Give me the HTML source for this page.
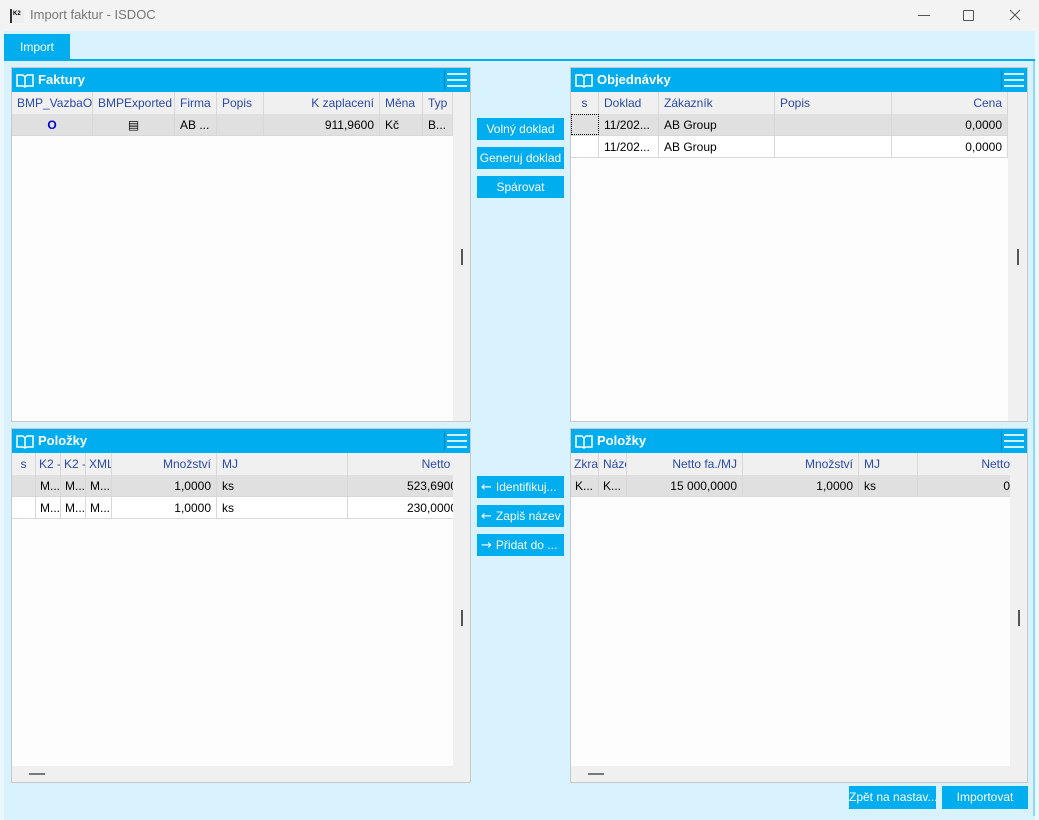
<!DOCTYPE html>
<html><head><meta charset="utf-8"><style>
*{box-sizing:border-box;margin:0;padding:0}
body{width:1039px;height:820px;position:relative;overflow:hidden;background:#f3f3f3;font-family:"Liberation Sans",sans-serif;font-size:12px;color:#000}
.a{position:absolute}
.title{left:0;top:0;width:1039px;height:31px;background:#f3f3f3}
.panel{background:#fdfdfd;border:1px solid #c8c8c8}
.ph{background:#00adef;color:#fff;font-weight:bold;font-size:13px;height:24px;line-height:24px}
.ch{background:#f0f0f0;color:#2a4aa8;height:22px;line-height:22px;white-space:nowrap;overflow:hidden}
.c{position:absolute;top:0;height:100%;border-right:1px solid #d8d8d8;padding:0 5px;overflow:hidden;white-space:nowrap}
.r{text-align:right}
.row{height:22px;line-height:22px;white-space:nowrap;overflow:hidden;border-bottom:1px solid #d8d8d8}
.sel{background:#e0e0e0}
.btn{background:#00adef;color:#fff;text-align:center;line-height:22px;height:22px;font-size:12px;white-space:nowrap;overflow:hidden}
.vs{background:#f0f0f0}
.menu{position:absolute;right:3px;top:5px;width:20px;height:14px;border-top:2px solid #cfeffd;border-bottom:2px solid #cfeffd}
.menu:after{content:"";position:absolute;left:0;right:0;top:4px;height:2px;background:#cfeffd}
.msep{position:absolute;right:25px;top:2px;width:1px;height:20px;background:#0080c0}
.ar{font-family:"DejaVu Sans",sans-serif;font-size:13px;margin-right:4px}
</style></head><body>
<div class="a title">
 <div class="a" style="left:10px;top:9px;width:14px;height:14px;border-left:2px solid #333;background:#eee;font-size:6px;font-weight:bold;line-height:10px;padding-left:1px">K2</div>
 <div class="a" style="left:30px;top:7px;color:#777;font-size:13px">Import faktur - ISDOC</div>
 <div class="a" style="left:918px;top:15px;width:12px;height:1px;background:#555"></div>
 <div class="a" style="left:963px;top:10px;width:11px;height:11px;border:1px solid #555;border-radius:1px"></div>
 <svg class="a" style="left:1009px;top:9px" width="12" height="12"><path d="M1 1L11 11M11 1L1 11" stroke="#555" stroke-width="1"/></svg>
</div>
<div class="a" style="left:0;top:31px;width:1039px;height:789px;background:#d9f3fe;border-left:4px solid #eaf7fd;border-right:4px solid #eaf7fd"></div>
<div class="a" style="left:4px;top:34px;width:66px;height:26px;background:#00adef;color:#fff;text-align:center;line-height:26px">Import</div>
<div class="a" style="left:4px;top:59px;width:1031px;height:2px;background:#00adef"></div>
<div class="a" style="left:1033px;top:61px;width:2px;height:755px;background:#8fd8f7"></div>

<!-- Faktury -->
<div class="a panel" style="left:11px;top:67px;width:460px;height:355px">
 <div class="ph" style="padding-left:26px;position:relative">Faktury<svg class="a" style="left:4px;top:5px" width="18" height="16"><path d="M1 2h6l2 2 2-2h6v11h-6l-2 1-2-1H1z M9 4v10" fill="none" stroke="#fff" stroke-width="1.5"/></svg><div class="msep"></div><div class="menu"></div></div>
 <div class="ch" style="position:relative;width:441px">
  <div class="c" style="left:0;width:81px">BMP_VazbaO</div><div class="c" style="left:81px;width:82px">BMPExported</div><div class="c" style="left:163px;width:42px">Firma</div><div class="c" style="left:205px;width:47px">Popis</div><div class="c r" style="left:252px;width:116px">K zaplacení</div><div class="c" style="left:368px;width:43px">Měna</div><div class="c" style="left:411px;width:30px">Typ</div>
 </div>
 <div class="row sel" style="position:relative;width:441px">
  <div class="c" style="left:0;width:81px;text-align:center;color:#0000cc;font-weight:bold">O</div><div class="c" style="left:81px;width:82px;text-align:center">▤</div><div class="c" style="left:163px;width:42px">AB ...</div><div class="c" style="left:205px;width:47px"></div><div class="c r" style="left:252px;width:116px">911,9600</div><div class="c" style="left:368px;width:43px">Kč</div><div class="c" style="left:411px;width:30px">B...</div>
 </div>
 <div class="a vs" style="left:441px;top:24px;width:17px;height:329px"><div class="a" style="left:8px;top:157px;width:2px;height:16px;background:#555"></div></div>
</div>

<!-- Objednavky -->
<div class="a panel" style="left:570px;top:67px;width:458px;height:355px">
 <div class="ph" style="padding-left:26px;position:relative">Objednávky<svg class="a" style="left:4px;top:5px" width="18" height="16"><path d="M1 2h6l2 2 2-2h6v11h-6l-2 1-2-1H1z M9 4v10" fill="none" stroke="#fff" stroke-width="1.5"/></svg><div class="msep"></div><div class="menu"></div></div>
 <div class="ch" style="position:relative;width:437px">
  <div class="c" style="left:0;width:28px;text-align:center">s</div><div class="c" style="left:28px;width:60px">Doklad</div><div class="c" style="left:88px;width:116px">Zákazník</div><div class="c" style="left:204px;width:117px">Popis</div><div class="c r" style="left:321px;width:116px">Cena</div>
 </div>
 <div class="row sel" style="position:relative;width:437px">
  <div class="c" style="left:0;width:28px;border:1px dotted #000"></div><div class="c" style="left:28px;width:60px">11/202...</div><div class="c" style="left:88px;width:116px">AB Group</div><div class="c" style="left:204px;width:117px"></div><div class="c r" style="left:321px;width:116px">0,0000</div>
 </div>
 <div class="row" style="position:relative;width:437px;background:#fff">
  <div class="c" style="left:0;width:28px"></div><div class="c" style="left:28px;width:60px">11/202...</div><div class="c" style="left:88px;width:116px">AB Group</div><div class="c" style="left:204px;width:117px"></div><div class="c r" style="left:321px;width:116px">0,0000</div>
 </div>
 <div class="a vs" style="left:437px;top:24px;width:19px;height:329px"><div class="a" style="left:9px;top:157px;width:2px;height:16px;background:#555"></div></div>
</div>

<!-- Polozky left -->
<div class="a panel" style="left:11px;top:428px;width:460px;height:355px">
 <div class="ph" style="padding-left:26px;position:relative">Položky<svg class="a" style="left:4px;top:5px" width="18" height="16"><path d="M1 2h6l2 2 2-2h6v11h-6l-2 1-2-1H1z M9 4v10" fill="none" stroke="#fff" stroke-width="1.5"/></svg><div class="msep"></div><div class="menu"></div></div>
 <div class="ch" style="position:relative;width:441px">
  <div class="c" style="left:0;width:24px;text-align:center;padding:0">s</div><div class="c" style="left:24px;width:25px;padding:0 3px">K2 -</div><div class="c" style="left:49px;width:25px;padding:0 3px">K2 -</div><div class="c" style="left:74px;width:26px;padding:0 3px">XML</div><div class="c r" style="left:100px;width:105px">Množství</div><div class="c" style="left:205px;width:131px">MJ</div><div class="c r" style="left:336px;width:110px;padding-right:0">Netto f</div>
 </div>
 <div class="row sel" style="position:relative;width:441px">
  <div class="c" style="left:0;width:24px"></div><div class="c" style="left:24px;width:25px;padding:0 4px">M...</div><div class="c" style="left:49px;width:25px;padding:0 4px">M...</div><div class="c" style="left:74px;width:26px;padding:0 4px">M...</div><div class="c r" style="left:100px;width:105px">1,0000</div><div class="c" style="left:205px;width:131px">ks</div><div class="c r" style="left:336px;width:110px;padding-right:0">523,6900</div>
 </div>
 <div class="row" style="position:relative;width:441px;background:#fff">
  <div class="c" style="left:0;width:24px"></div><div class="c" style="left:24px;width:25px;padding:0 4px">M...</div><div class="c" style="left:49px;width:25px;padding:0 4px">M...</div><div class="c" style="left:74px;width:26px;padding:0 4px">M...</div><div class="c r" style="left:100px;width:105px">1,0000</div><div class="c" style="left:205px;width:131px">ks</div><div class="c r" style="left:336px;width:110px;padding-right:0">230,0000</div>
 </div>
 <div class="a vs" style="left:441px;top:24px;width:17px;height:329px"><div class="a" style="left:8px;top:157px;width:2px;height:16px;background:#555"></div></div>
 <div class="a vs" style="left:0;top:337px;width:441px;height:16px"><div class="a" style="left:17px;top:7px;width:16px;height:2px;background:#777"></div></div>
</div>

<!-- Polozky right -->
<div class="a panel" style="left:570px;top:428px;width:458px;height:355px">
 <div class="ph" style="padding-left:26px;position:relative">Položky<svg class="a" style="left:4px;top:5px" width="18" height="16"><path d="M1 2h6l2 2 2-2h6v11h-6l-2 1-2-1H1z M9 4v10" fill="none" stroke="#fff" stroke-width="1.5"/></svg><div class="msep"></div><div class="menu"></div></div>
 <div class="ch" style="position:relative;width:439px">
  <div class="c" style="left:0;width:28px;padding:0 3px">Zkra</div><div class="c" style="left:28px;width:28px;padding:0 4px">Náze</div><div class="c r" style="left:56px;width:116px">Netto fa./MJ</div><div class="c r" style="left:172px;width:116px">Množství</div><div class="c" style="left:288px;width:59px">MJ</div><div class="c r" style="left:347px;width:92px;padding-right:0;border-right:none">Netto</div>
 </div>
 <div class="row sel" style="position:relative;width:439px">
  <div class="c" style="left:0;width:28px;padding:0 4px">K...</div><div class="c" style="left:28px;width:28px;padding:0 4px">K...</div><div class="c r" style="left:56px;width:116px">15 000,0000</div><div class="c r" style="left:172px;width:116px">1,0000</div><div class="c" style="left:288px;width:59px">ks</div><div class="c r" style="left:347px;width:92px;padding-right:0;border-right:none">0</div>
 </div>
 <div class="a vs" style="left:439px;top:24px;width:17px;height:329px"><div class="a" style="left:8px;top:157px;width:2px;height:16px;background:#555"></div></div>
 <div class="a vs" style="left:0;top:337px;width:439px;height:16px"><div class="a" style="left:17px;top:7px;width:16px;height:2px;background:#777"></div></div>
</div>

<!-- middle buttons -->
<div class="a btn" style="left:477px;top:118px;width:87px">Volný doklad</div>
<div class="a btn" style="left:477px;top:147px;width:87px">Generuj doklad</div>
<div class="a btn" style="left:477px;top:176px;width:87px">Spárovat</div>
<div class="a btn" style="left:477px;top:476px;width:87px;text-align:left;padding-left:4px"><span class="ar">←</span>Identifikuj...</div>
<div class="a btn" style="left:477px;top:505px;width:87px;text-align:left;padding-left:4px"><span class="ar">←</span>Zapiš název</div>
<div class="a btn" style="left:477px;top:534px;width:87px;text-align:left;padding-left:4px"><span class="ar">→</span>Přidat do ...</div>

<div class="a btn" style="left:849px;top:786px;width:87px;height:23px">Zpět na nastav...</div>
<div class="a btn" style="left:942px;top:786px;width:86px;height:23px">Importovat</div>
</body></html>
